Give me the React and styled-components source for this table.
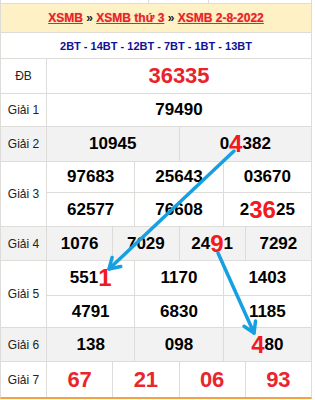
import styled, { createGlobalStyle } from 'styled-components'

const GlobalStyle = createGlobalStyle`
body {
    margin: 0;
    background: #fff;
    font-family: "Liberation Sans", Arial, sans-serif;
}
`

const LINE = '#dedcd8'

const prizes = [
    { label: 'Giải 1', cols: 1, rows: '32px', bg: '#fff', nums: ['79490'] },
    { label: 'Giải 2', cols: 2, rows: '34px', bg: '#f2f2f2', nums: ['10945', ['0', '4', '382']] },
    { label: 'Giải 3', cols: 3, rows: '30px 33px', bg: '#fff', nums: ['97683', '25643', '03670', '62577', '76608', ['2', '36', '25']] },
    { label: 'Giải 4', cols: 4, rows: '33px', bg: '#f2f2f2', nums: ['1076', '7029', ['24', '9', '1'], '7292'] },
    { label: 'Giải 5', cols: 3, rows: '34px 31px', bg: '#fff', nums: [['551', '1', ''], '1170', '1403', '4791', '6830', '1185'] },
    { label: 'Giải 6', cols: 3, rows: '33px', bg: '#f2f2f2', nums: ['138', '098', ['', '4', '80']] },
]

const Arrow = ({ from, to }) => {
    const dx = to[0] - from[0]
    const dy = to[1] - from[1]
    const len = Math.hypot(dx, dy)
    const ux = dx / len
    const uy = dy / len
    const wing = (a) => {
        const c = Math.cos(a)
        const s = Math.sin(a)
        const bx = -ux * c + uy * s
        const by = -uy * c - ux * s
        return `${to[0] + bx * 12},${to[1] + by * 12}`
    }
    return <g>
        <line x1={from[0]} y1={from[1]} x2={to[0]} y2={to[1]} />
        <polyline points={`${wing(0.55)} ${to[0]},${to[1]} ${wing(-0.55)}`} fill="none" />
    </g>
}

const Number = ({ value }) => {
    if (typeof value === 'string') return value
    return <>
        {value[0]}<Hot>{value[1]}</Hot>{value[2]}
    </>
}

const App = () => {
    return <>
        <GlobalStyle />
        <Board>
            <Strip>
                <StripCell />
                <StripCell />
                <StripCell />
            </Strip>
            <Header>
                <span>
                    <Link>XSMB</Link> <Sep>»</Sep> <Link>XSMB thứ 3</Link> <Sep>»</Sep> <Link>XSMB 2-8-2022</Link>
                </span>
            </Header>
            <Codes>2BT - 14BT - 12BT - 7BT - 1BT - 13BT</Codes>
            <Prize>
                <Label $bg="#fff">ĐB</Label>
                <Numbers $cols={1} $rows="34px">
                    <Cell $bg="#fff"><Special>36335</Special></Cell>
                </Numbers>
            </Prize>
            {prizes.map((p) => (
                <Prize key={p.label}>
                    <Label $bg={p.bg}>{p.label}</Label>
                    <Numbers $cols={p.cols} $rows={p.rows}>
                        {p.nums.map((n, i) => (
                            <Cell key={i} $bg={p.bg}><Number value={n} /></Cell>
                        ))}
                    </Numbers>
                </Prize>
            ))}
            <Prize>
                <Label $bg="#fff">Giải 7</Label>
                <Numbers $cols={4} $rows="35px">
                    {['67', '21', '06', '93'].map((n) => (
                        <Cell key={n} $bg="#fff"><Last>{n}</Last></Cell>
                    ))}
                </Numbers>
            </Prize>
            <Overlay width="312" height="398" viewBox="0 0 312 398">
                <Arrow from={[234, 151]} to={[109, 269]} />
                <Arrow from={[218, 253]} to={[254, 333]} />
            </Overlay>
        </Board>
    </>
}

const Board = styled.div`
position: relative;
box-sizing: border-box;
width: 312px;
display: grid;
gap: 1px;
background: ${LINE};
border: 1px solid ${LINE};
border-top: none;
border-bottom: 2px solid #f0a24a;
`

const Strip = styled.div`
display: grid;
grid-template-columns: 147px 59px 1fr;
gap: 1px;
height: 3px;
`

const StripCell = styled.div`
background: #fff;
`

const Header = styled.div`
height: 28px;
background: #fdf1c5;
display: flex;
align-items: center;
justify-content: center;
font-size: 12px;
font-weight: bold;
`

const Link = styled.span`
color: #e8232b;
text-decoration: underline;
text-shadow: 0 0 1px rgba(230, 40, 40, 0.5);
`

const Sep = styled.span`
color: #222;
`

const Codes = styled.div`
height: 25px;
background: #fff;
display: flex;
align-items: center;
justify-content: center;
font-size: 11px;
font-weight: bold;
color: #10109a;
`

const Prize = styled.div`
display: grid;
grid-template-columns: 45px 1fr;
gap: 1px;
`

const Label = styled.div`
background: ${(p) => p.$bg};
display: flex;
align-items: center;
justify-content: center;
font-size: 12px;
color: #222;
`

const Numbers = styled.div`
display: grid;
grid-template-columns: repeat(${(p) => p.$cols}, 1fr);
grid-template-rows: ${(p) => p.$rows};
gap: 1px;
`

const Cell = styled.div`
background: ${(p) => p.$bg};
display: flex;
align-items: center;
justify-content: center;
font-size: 17px;
font-weight: bold;
color: #000;
`

const Hot = styled.span`
font-size: 24px;
color: #f01a20;
line-height: 1;
`

const Special = styled.span`
font-size: 22px;
color: #e8232b;
`

const Last = styled.span`
font-size: 22px;
color: #e9252e;
`

const Overlay = styled.svg`
position: absolute;
top: 0;
left: -1px;
pointer-events: none;
stroke: #17a0e0;
stroke-width: 3.5;
stroke-linecap: round;
stroke-linejoin: round;
`

export default App
